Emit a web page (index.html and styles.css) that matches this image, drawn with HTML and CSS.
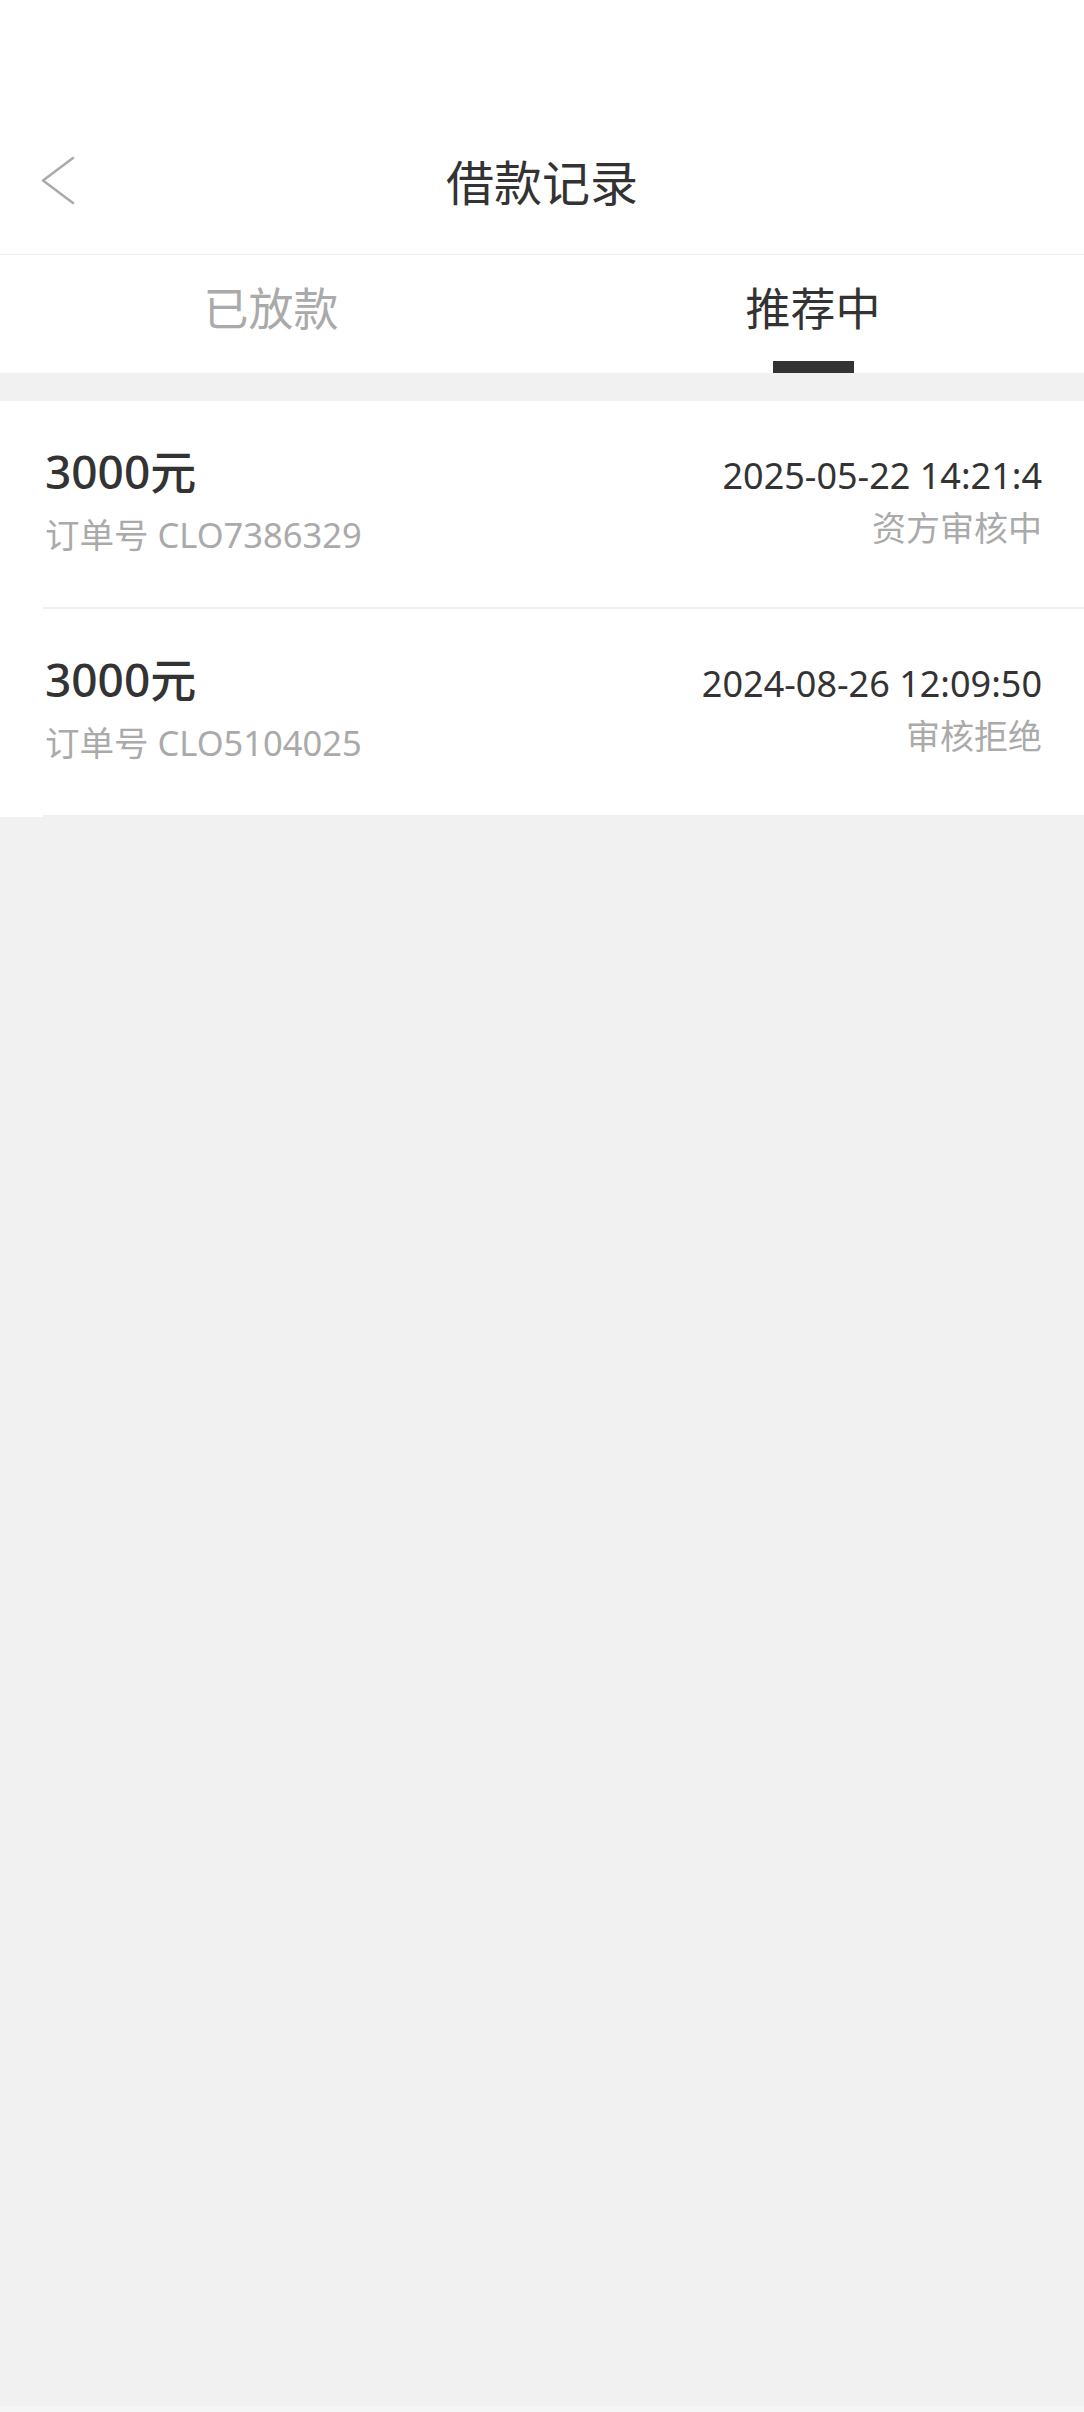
FILE: index.html
```html
<!DOCTYPE html>
<html lang="zh-CN">
<head>
<meta charset="utf-8">
<title>借款记录</title>
<link rel="stylesheet" href="styles.css">
</head>
<body>
<div class="page">
  <header class="topbar">
    <div class="nav">
      <div class="nav-left">
        <svg class="back" width="40" height="60" viewBox="0 0 40 60" aria-hidden="true">
          <polyline points="35,8 5,30.5 35,53" fill="none" stroke="#aaaaaa" stroke-width="2.6" stroke-linecap="round" stroke-linejoin="round"/>
        </svg>
      </div>
      <h1 class="title">借款记录</h1>
      <div class="nav-right"></div>
    </div>
  </header>

  <nav class="tabs">
    <div class="tab">
      <span class="tab-label">已放款</span>
    </div>
    <div class="tab tab-active">
      <span class="tab-label">推荐中</span>
      <span class="tab-indicator"></span>
    </div>
  </nav>

  <main class="content">
    <ul class="list">
      <li class="item">
        <div class="item-left">
          <div class="amount">3000元</div>
          <div class="order">订单号 CLO7386329</div>
        </div>
        <div class="item-right">
          <div class="date">2025-05-22 14:21:4</div>
          <div class="status">资方审核中</div>
        </div>
      </li>
      <li class="item">
        <div class="item-left">
          <div class="amount">3000元</div>
          <div class="order">订单号 CLO5104025</div>
        </div>
        <div class="item-right">
          <div class="date">2024-08-26 12:09:50</div>
          <div class="status">审核拒绝</div>
        </div>
      </li>
    </ul>
  </main>
  <div class="bottom-strip"></div>
</div>
</body>
</html>
```

FILE: styles.css
```css
* {
  box-sizing: border-box;
}

html, body {
  margin: 0;
  padding: 0;
}

body {
  background: #f1f1f1;
  font-family: "Noto Sans", "Noto Sans CJK SC", sans-serif;
  color: #333333;
}

.page {
  min-height: 2412px;
  display: flex;
  flex-direction: column;
}

.topbar {
  background: #ffffff;
  height: 255px;
  padding-top: 108px;
  border-bottom: 1px solid #ededed;
}

.nav {
  height: 144px;
  display: grid;
  grid-template-columns: 1fr auto 1fr;
  align-items: center;
}

.nav-left {
  padding-left: 38px;
  display: flex;
  align-items: center;
}

.back {
  display: block;
}

.title {
  margin: 0;
  font-family: "Noto Sans CJK SC", sans-serif;
  font-size: 48px;
  font-weight: 400;
  line-height: 48px;
  color: #333333;
  letter-spacing: 0;
}

.tabs {
  background: #ffffff;
  display: flex;
  height: 118px;
}

.tab {
  flex: 1;
  display: flex;
  flex-direction: column;
  align-items: center;
  padding-top: 29px;
}

.tab-label {
  font-family: "Noto Sans CJK SC", sans-serif;
  font-size: 45px;
  line-height: 46px;
  color: #aaaaaa;
}

.tab-active .tab-label {
  color: #333333;
}

.tab-indicator {
  margin-top: auto;
  width: 81px;
  height: 12px;
  background: #333333;
}

.content {
  flex: 1;
  padding-top: 28px;
}

.list {
  list-style: none;
  margin: 0;
  padding: 0;
  background: #ffffff;
}

.item {
  margin-left: 43px;
  padding: 42px 42px 0 2px;
  height: 208px;
  border-bottom: 2px solid #efefef;
  display: flex;
  justify-content: space-between;
  align-items: flex-start;
}

.item-left {
  display: flex;
  flex-direction: column;
}

.amount {
  font-size: 46px;
  line-height: 56px;
  font-weight: 500;
  color: #333333;
}

.order {
  margin-top: 14px;
  font-size: 34.5px;
  line-height: 44px;
  color: #aaaaaa;
}

.item-right {
  display: flex;
  flex-direction: column;
  align-items: flex-end;
  padding-top: 11px;
}

.date {
  font-size: 36px;
  line-height: 44px;
  color: #333333;
}

.status {
  margin-top: 8px;
  font-size: 34px;
  line-height: 44px;
  color: #aaaaaa;
}

.bottom-strip {
  height: 6px;
  background: #f5f5f5;
}
```
